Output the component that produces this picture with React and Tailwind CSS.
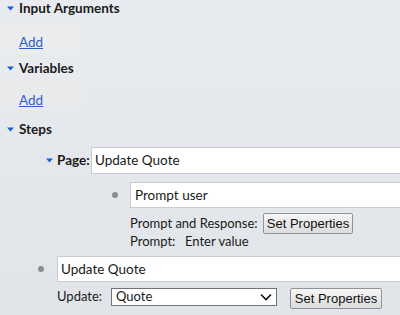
import React from "react";

const Tri = () => (
  <svg width="7" height="5" viewBox="0 0 7 5" className="shrink-0">
    <path d="M0 0.5 L7 0.5 L3.5 4.5 Z" fill="#1f5fd6" />
  </svg>
);

const Dot = () => <div className="w-[6px] h-[6px] rounded-full bg-[#8a8c90] shrink-0" />;

const Btn = ({ children, cls }) => (
  <div
    className={
      "shrink-0 flex items-center justify-center border border-[#8f9297] rounded-[2px] bg-gradient-to-b from-[#f6f6f6] to-[#dcdcdc] text-[13px] text-[#111] " +
      cls
    }
    style={{ fontFamily: '"Liberation Sans", Arial, sans-serif' }}
  >
    {children}
  </div>
);

export default function App() {
  return (
    <div
      className="w-[400px] h-[315px] overflow-hidden bg-gradient-to-b from-[#e8ebef] to-[#e1e5ea] text-[13px] text-[#1a1a1a]"
      style={{ fontFamily: 'Lato, "Noto Sans", sans-serif' }}
    >
      {/* Input Arguments */}
      <div className="h-[17px] flex items-center pl-[7px] gap-[5px]">
        <Tri />
        <span className="font-bold text-[13.5px]">Input Arguments</span>
      </div>
      <div className="mt-[5px] h-[33px] w-[82px] bg-[#ebecee] pl-[19px] pt-[12px]">
        <span className="text-[#2f5fc8] underline leading-[16px] block text-[13.5px]">Add</span>
      </div>
      {/* Variables */}
      <div className="mt-[5px] h-[17px] w-[82px] bg-[#e9ebee] flex items-center pl-[7px] gap-[5px]">
        <Tri />
        <span className="font-bold text-[13.5px]">Variables</span>
      </div>
      <div className="mt-[1px] h-[32px] w-[82px] bg-[#e9eaec] pl-[19px] pt-[14px]">
        <span className="text-[#2f5fc8] underline leading-[16px] block text-[13.5px]">Add</span>
      </div>
      {/* Steps */}
      <div className="mt-[11px] h-[17px] flex items-center pl-[7px] gap-[5px]">
        <Tri />
        <span className="font-bold text-[13.5px]">Steps</span>
      </div>
      {/* Page row */}
      <div className="mt-[9px] h-[27px] flex items-center pl-[46px]">
        <Tri />
        <span className="font-bold ml-[4px] w-[34px] shrink-0 text-[13.5px]">Page:</span>
        <div className="h-full w-[320px] shrink-0 bg-white border border-[#c9ccd1] flex items-center pl-[3px] text-[13.5px]">
          Update Quote
        </div>
      </div>
      {/* Prompt user */}
      <div className="mt-[8px] h-[26px] flex items-center pl-[112px]">
        <Dot />
        <div className="ml-[12px] h-full w-[280px] shrink-0 bg-white border border-[#c9ccd1] flex items-center pl-[4px] text-[13.5px]">
          Prompt user
        </div>
      </div>
      <div className="mt-[5px] h-[21px] flex items-center pl-[130px]">
        <span className="w-[133px] shrink-0">Prompt and Response:</span>
        <Btn cls="w-[90px] h-[21px]">Set Properties</Btn>
      </div>
      <div className="h-[15px] flex items-center pl-[130px]">
        <span className="w-[55px] shrink-0">Prompt:</span>
        <span>Enter value</span>
      </div>
      {/* Update Quote */}
      <div className="mt-[7px] h-[26px] flex items-center pl-[38px]">
        <Dot />
        <div className="ml-[13px] h-full w-[360px] shrink-0 bg-white border border-[#c9ccd1] flex items-center pl-[3px] text-[13.5px]">
          Update Quote
        </div>
      </div>
      <div className="mt-[6px] h-[20px] flex items-start pl-[57px]">
        <span className="w-[54px] shrink-0 h-[18px] flex items-center">Update:</span>
        <div className="w-[166px] shrink-0 h-[18px] bg-white border border-[#6f7276] flex items-center pl-[4px] pr-[4px] justify-between">
          <span>Quote</span>
          <svg width="12" height="8" viewBox="0 0 12 8">
            <path d="M1 1.5 L6 6.5 L11 1.5" fill="none" stroke="#111" strokeWidth="1.6" />
          </svg>
        </div>
        <Btn cls="ml-[13px] w-[92px] h-[21px]">Set Properties</Btn>
      </div>
    </div>
  );
}
